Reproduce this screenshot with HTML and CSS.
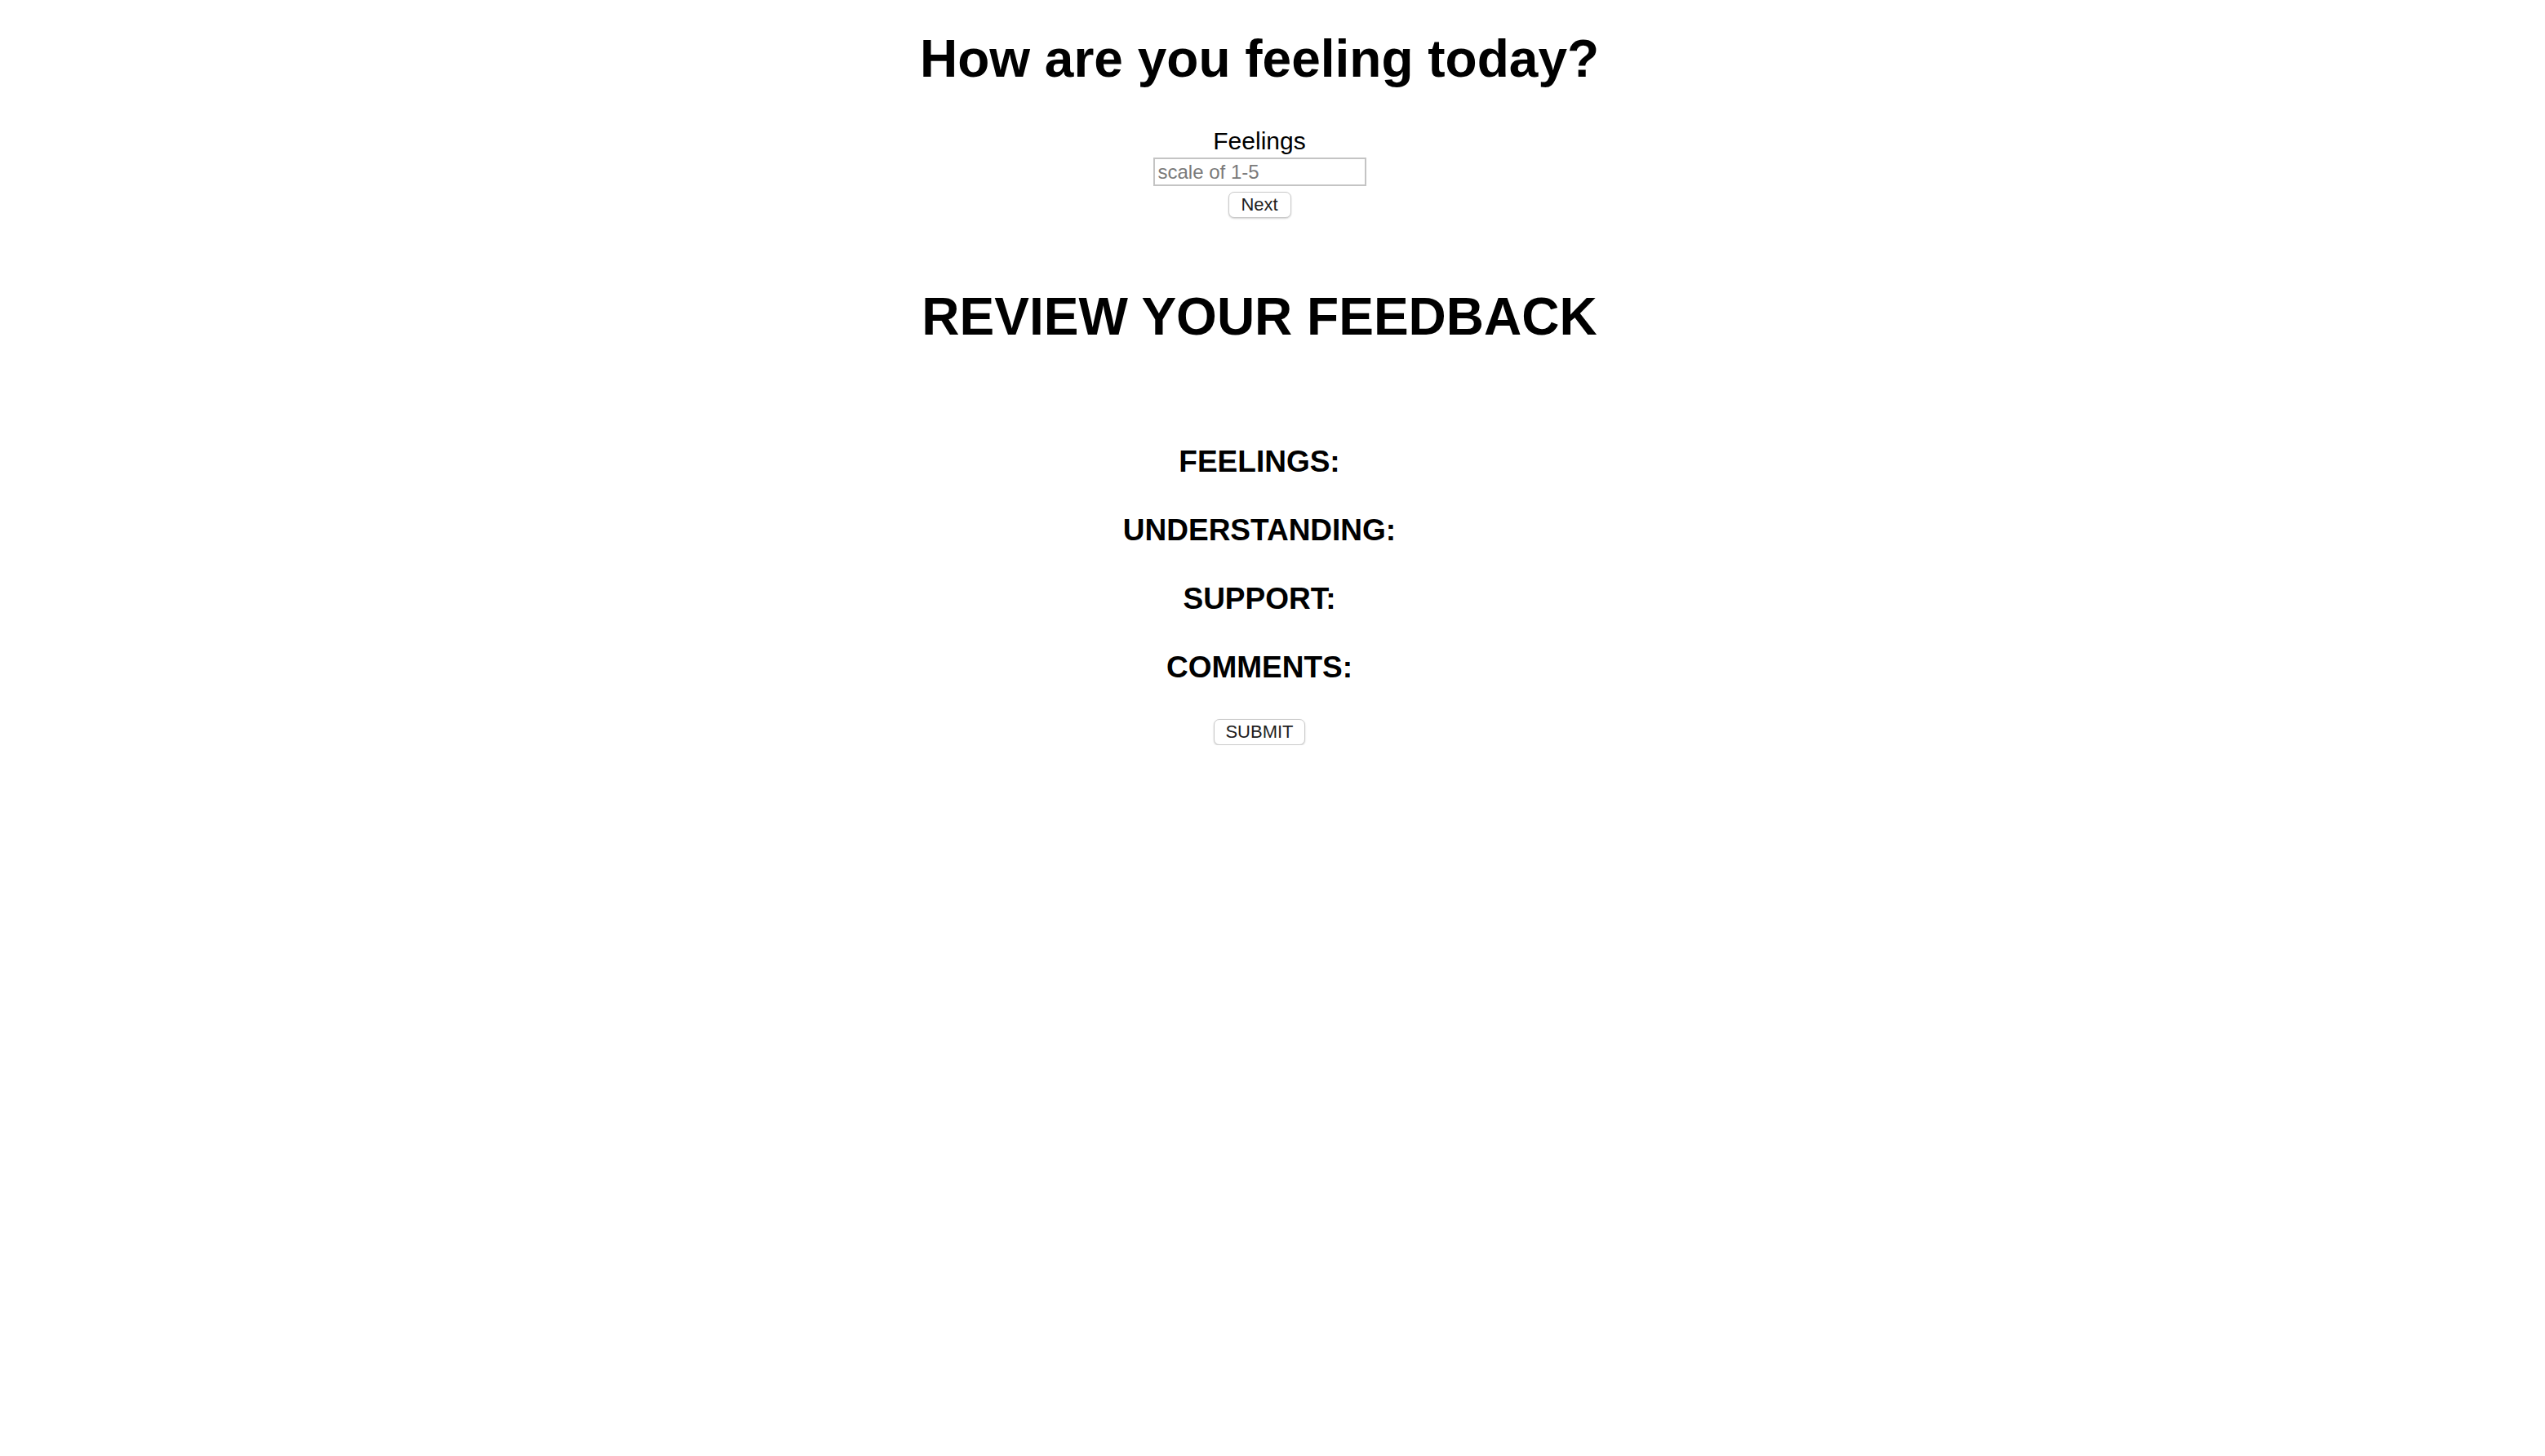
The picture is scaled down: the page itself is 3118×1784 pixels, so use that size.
FILE: index.html
```html
<!DOCTYPE html>
<html lang="en">
<head>
<meta charset="utf-8">
<title>Feedback</title>
<link rel="stylesheet" href="styles.css">
</head>
<body>
<main class="page">
  <h1 class="title">How are you feeling today?</h1>
  <form class="step">
    <label class="step-label" for="feelings">Feelings</label>
    <input class="step-input" id="feelings" type="text" placeholder="scale of 1-5">
    <button class="btn btn-next" type="button">Next</button>
  </form>
  <section class="review">
    <h1 class="review-title">REVIEW YOUR FEEDBACK</h1>
    <h3 class="review-item review-first">FEELINGS:</h3>
    <h3 class="review-item">UNDERSTANDING:</h3>
    <h3 class="review-item">SUPPORT:</h3>
    <h3 class="review-item">COMMENTS:</h3>
    <button class="btn btn-submit" type="button">SUBMIT</button>
  </section>
</main>
</body>
</html>
```
FILE: styles.css
```css
html, body {
  margin: 0;
  padding: 0;
  background: #ffffff;
}

body {
  font-family: "Liberation Sans", Arial, Helvetica, sans-serif;
  color: #000000;
}

.page {
  display: flex;
  flex-direction: column;
  align-items: center;
  text-align: center;
  padding-right: 32px;
}

.title {
  margin: 35px 0 0 0;
  font-size: 64px;
  line-height: 74px;
  font-weight: 700;
}

.step {
  display: flex;
  flex-direction: column;
  align-items: center;
  margin: 47px 0 0 0;
}

.step-label {
  font-size: 30px;
  line-height: 34px;
}

.step-input {
  box-sizing: border-box;
  width: 261px;
  height: 35px;
  margin: 3px 0 0 0;
  padding: 0 4px;
  border: 2px solid #c4c4c4;
  border-radius: 0;
  font-family: "Liberation Sans", Arial, sans-serif;
  font-size: 24px;
  color: #000;
  outline: none;
}

.step-input::placeholder {
  color: #7a7a7a;
}

.btn {
  box-sizing: border-box;
  height: 32px;
  padding: 0;
  background: #ffffff;
  border: 1px solid #cacaca;
  border-radius: 7px;
  box-shadow: 0 1px 2px rgba(0, 0, 0, 0.18);
  font-family: "Liberation Sans", Arial, sans-serif;
  font-size: 22px;
  line-height: 30px;
  color: #1e1e1e;
}

.btn-next {
  width: 77px;
  margin: 7px 0 0 0;
}

.review {
  display: flex;
  flex-direction: column;
  align-items: center;
  margin: 84px 0 0 0;
}

.review-title {
  margin: 0;
  font-size: 64px;
  line-height: 74px;
  font-weight: 700;
}

.review-item {
  margin: 41px 0 0 0;
  font-size: 37px;
  line-height: 43px;
  font-weight: 700;
}

.review-first {
  margin-top: 119px;
}

.btn-submit {
  width: 112px;
  margin: 42px 0 0 0;
}
```
